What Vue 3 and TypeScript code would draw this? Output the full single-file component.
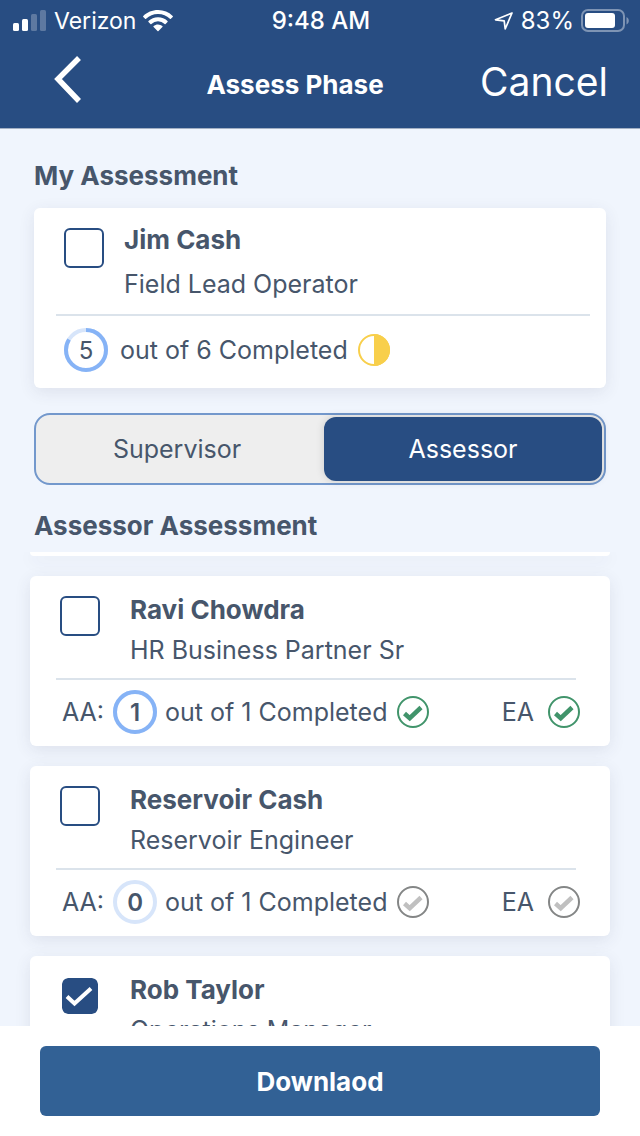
<script setup lang="ts">
import { ref } from 'vue'

interface Progress {
  done: number
  total: number
  complete: boolean
}

interface Person {
  id: string
  name: string
  role: string
  selected: boolean
  progress?: Progress
}

const me = ref({ name: 'Jim Cash', role: 'Field Lead Operator', selected: false, done: 5, total: 6 })

const people = ref<Person[]>([
  { id: 'ravi', name: 'Ravi Chowdra', role: 'HR Business Partner Sr', selected: false, progress: { done: 1, total: 1, complete: true } },
  { id: 'reservoir', name: 'Reservoir Cash', role: 'Reservoir Engineer', selected: false, progress: { done: 0, total: 1, complete: false } },
  { id: 'rob', name: 'Rob Taylor', role: 'Operations Manager', selected: true },
])

const tabs = ['Supervisor', 'Assessor'] as const
const activeTab = ref<(typeof tabs)[number]>('Assessor')

const circumference = 2 * Math.PI * 20
const dash = (done: number, total: number): string =>
  `${(circumference * done) / total} ${circumference}`
</script>

<template>
  <div class="screen">
    <header class="top">
      <div class="status">
        <div class="status-left">
          <svg class="signal" viewBox="0 0 34 22" aria-hidden="true">
            <rect x="0" y="13" width="6" height="8" rx="1.5" fill="#fff" />
            <rect x="9" y="9" width="6" height="12" rx="1.5" fill="#fff" />
            <rect x="18" y="4" width="6" height="17" rx="1.5" fill="#fff" opacity=".25" />
            <rect x="27" y="0" width="6" height="21" rx="1.5" fill="#fff" opacity=".25" />
          </svg>
          <span>Verizon</span>
          <svg class="wifi" viewBox="0 0 30 22" aria-hidden="true">
            <path d="M15 0C9.300 0 4 2.200.3 5.900a.7.7 0 0 0 0 1l1.800 1.900a.7.7 0 0 0 1 0A17 17 0 0 1 15 4.100a17 17 0 0 1 11.900 4.700.7.7 0 0 0 1 0l1.800-1.900a.7.7 0 0 0 0-1A21.100 21.100 0 0 0 15 0Z" fill="#fff" />
            <path d="M15 7.300c-3.700 0-7 1.400-9.500 3.700a.7.7 0 0 0 0 1l1.900 1.900a.7.7 0 0 0 1 0 9.600 9.600 0 0 1 13.200 0 .7.7 0 0 0 1 0l1.900-1.900a.7.7 0 0 0 0-1A13.900 13.900 0 0 0 15 7.300Z" fill="#fff" />
            <path d="M15 14.500c-1.700 0-3.200.6-4.400 1.600a.7.7 0 0 0 0 1l3.900 4a.7.7 0 0 0 1 0l3.900-4a.7.7 0 0 0 0-1 6.800 6.800 0 0 0-4.400-1.600Z" fill="#fff" />
          </svg>
        </div>
        <span class="clock">9:48 AM</span>
        <div class="status-right">
          <svg class="locate" viewBox="0 0 20 20" aria-hidden="true">
            <path d="M18 2 1.500 8.800l8.700 1L11.200 18 18 2Z" fill="none" stroke="#fff" stroke-width="1.700" stroke-linejoin="round" />
          </svg>
          <span>83%</span>
          <svg class="battery" viewBox="0 0 48 24" aria-hidden="true">
            <rect x="1" y="1" width="42" height="21" rx="6" fill="none" stroke="#fff" stroke-width="2" opacity=".4" />
            <rect x="4" y="4" width="30" height="15" rx="3" fill="#fff" />
            <path d="M45.500 8v7.500c1.500-.7 2.300-2 2.300-3.700s-.8-3.100-2.300-3.800Z" fill="#fff" opacity=".4" />
          </svg>
        </div>
      </div>
      <nav class="nav">
        <button class="back" type="button" aria-label="Back">
          <svg viewBox="0 0 28 50" aria-hidden="true">
            <path d="M25 3 4 24l21 22" fill="none" stroke="#fff" stroke-width="5.500" />
          </svg>
        </button>
        <h1>Assess Phase</h1>
        <button class="cancel" type="button">Cancel</button>
      </nav>
    </header>

    <main>
      <h2 class="mine">My Assessment</h2>
      <section class="card own">
        <label class="person">
          <span class="tick">
            <input v-model="me.selected" type="checkbox" />
            <svg viewBox="0 0 40 40" aria-hidden="true"><path d="m7 20.500 7.500 7L31 12.500" /></svg>
          </span>
          <span class="who">
            <strong>{{ me.name }}</strong>
            <span>{{ me.role }}</span>
          </span>
        </label>
        <div class="progress">
          <span class="ring">
            <svg viewBox="0 0 44 44" aria-hidden="true">
              <circle class="track" cx="22" cy="22" r="20" />
              <circle class="value" cx="22" cy="22" r="20" :stroke-dasharray="dash(me.done, me.total)" transform="rotate(-90 22 22)" />
            </svg>
            <span class="digit">{{ me.done }}</span>
          </span>
          <span class="count">out of {{ me.total }} Completed</span>
          <svg class="mark" viewBox="0 0 32 32" aria-hidden="true">
            <circle cx="16" cy="16" r="15" fill="#fff" stroke="#f8cf4b" stroke-width="2" />
            <path d="M16 0a16 16 0 0 1 0 32Z" fill="#f8cf4b" />
          </svg>
        </div>
      </section>

      <div class="tabs" role="tablist">
        <button
          v-for="tab in tabs"
          :key="tab"
          type="button"
          role="tab"
          :aria-selected="activeTab === tab"
          :class="{ active: activeTab === tab }"
          @click="activeTab = tab"
        >
          {{ tab }}
        </button>
      </div>

      <h2 class="theirs">Assessor Assessment</h2>
      <div class="list">
        <div class="card tail"></div>
        <section v-for="person in people" :key="person.id" class="card other">
          <label class="person">
            <span class="tick">
              <input v-model="person.selected" type="checkbox" />
              <svg viewBox="0 0 40 40" aria-hidden="true"><path d="m7 20.500 7.500 7L31 12.500" /></svg>
            </span>
            <span class="who">
              <strong>{{ person.name }}</strong>
              <span>{{ person.role }}</span>
            </span>
          </label>
          <div v-if="person.progress" class="progress" :class="{ complete: person.progress.complete }">
            <span>AA:</span>
            <span class="ring">
              <svg viewBox="0 0 44 44" aria-hidden="true">
                <circle class="track" cx="22" cy="22" r="20" />
                <circle v-if="person.progress.done" class="value" cx="22" cy="22" r="20" :stroke-dasharray="dash(person.progress.done, person.progress.total)" transform="rotate(-90 22 22)" />
              </svg>
              <span class="digit">{{ person.progress.done }}</span>
            </span>
            <span class="count">out of {{ person.progress.total }} Completed</span>
            <svg class="mark" viewBox="0 0 32 32" aria-hidden="true">
              <circle class="outline" cx="16" cy="16" r="15" />
              <path class="check" d="m7.500 17.500 5.200 4.700L24 11.500" />
            </svg>
            <span class="ea">EA</span>
            <svg class="mark" viewBox="0 0 32 32" aria-hidden="true">
              <circle class="outline" cx="16" cy="16" r="15" />
              <path class="check" d="m7.500 17.500 5.200 4.700L24 11.500" />
            </svg>
          </div>
        </section>
      </div>
    </main>

    <footer>
      <button type="button">Downlaod</button>
    </footer>
  </div>
</template>

<style>
body {
  background: #f0f5fd;
}
</style>

<style scoped>
.screen {
  display: flex;
  flex-direction: column;
  height: 100vh;
  overflow: hidden;
  box-sizing: border-box;
  color: #47566b;
  background: #f0f5fd;
  font-family: Inter, "Liberation Sans", sans-serif;
  font-size: 25px;
}

.screen *,
.screen *::before {
  box-sizing: border-box;
}

button {
  margin: 0;
  padding: 0;
  border: 0;
  background: none;
  color: inherit;
  font: inherit;
  cursor: pointer;
}

svg {
  display: block;
  flex: none;
}

strong {
  font-size: 26px;
  font-weight: 700;
}

.top {
  flex: none;
  background: #284d82;
  border-bottom: 1px solid #a3b0c4;
  color: #fff;
}

.status {
  display: grid;
  grid-template-columns: 1fr auto 1fr;
  align-items: center;
  height: 40px;
  padding: 1px 11px 0 13px;
  font-size: 24px;
}

.status-left,
.status-right {
  display: flex;
  align-items: center;
  gap: 7px;
}

.status-right {
  justify-content: flex-end;
}

.status-left {
  font-size: 23px;
}

.signal {
  width: 34px;
  height: 22px;
}

.wifi {
  width: 30px;
  height: 22px;
}

.clock {
  font-weight: 500;
}

.locate {
  width: 20px;
  height: 20px;
}

.battery {
  width: 48px;
  height: 24px;
}

.nav {
  display: flex;
  align-items: center;
  justify-content: space-between;
  height: 88px;
  padding: 0 32px 8px 54px;
}

.back {
  width: 56px;
  height: 50px;
}

.back svg {
  width: 28px;
  height: 50px;
}

h1,
h2 {
  margin: 0;
  font-size: 26px;
  font-weight: 700;
}

h1 {
  padding-top: 8px;
}

.cancel {
  padding-top: 2px;
  font-size: 39px;
}

main {
  display: flex;
  flex: 1;
  flex-direction: column;
  min-height: 0;
}

h2 {
  flex: none;
  padding: 0 34px;
  line-height: 32px;
}

.mine {
  margin: 31px 0 16px;
}

.theirs {
  margin: 25px 0 10px;
}

.card {
  flex: none;
  border-radius: 6px;
  background: #fff;
  box-shadow: 0 4px 16px rgb(60 60 90 / 10%);
}

.own {
  margin: 0 34px;
  padding: 10px 16px 4px 22px;
}

.other {
  min-height: 170px;
  padding: 14px 34px 0 26px;
}

.tail {
  height: 4px;
  border-radius: 0 0 6px 6px;
}

.person {
  display: flex;
  gap: 20px;
  padding: 0 8px 8px;
  cursor: pointer;
}

.other .person {
  gap: 30px;
  padding: 0 4px 8px;
}

.who {
  display: flex;
  flex-direction: column;
  line-height: 44px;
}

.other .who {
  line-height: 40px;
}

.tick {
  position: relative;
  flex: none;
  width: 40px;
  height: 40px;
  margin-top: 10px;
}

.other .tick {
  margin-top: 6px;
}

.tick input {
  display: block;
  width: 40px;
  height: 40px;
  margin: 0;
  appearance: none;
  border: 2px solid #284d82;
  border-radius: 6px;
  background: #fff;
}

.tick input:checked {
  border-color: #fff;
  border-radius: 8px;
  background: #284d82;
  background-clip: padding-box;
}

.tick svg {
  position: absolute;
  inset: 0;
  fill: none;
  stroke: #fff;
  stroke-width: 4;
  pointer-events: none;
}

.progress {
  display: flex;
  align-items: center;
  height: 70px;
  padding-left: 8px;
  border-top: 2px solid #dbe3eb;
}

.other .progress {
  height: 66px;
  padding-left: 6px;
}

.ring {
  display: grid;
  place-items: center;
  flex: none;
  margin-right: 12px;
  font-size: 24px;
}

.ring > * {
  grid-area: 1 / 1;
}

.ring svg {
  width: 44px;
  height: 44px;
}

.ring circle {
  fill: none;
  stroke-width: 4;
}

.ring .track {
  stroke: #d7e5fa;
}

.ring .value {
  stroke: #86b3f6;
}

.other .ring {
  margin: 0 8px 0 9px;
  font-weight: 600;
}

.count {
  margin-right: 10px;
}

.mark {
  width: 32px;
  height: 32px;
}

.outline {
  fill: none;
  stroke: #848686;
  stroke-width: 2;
}

.check {
  fill: none;
  stroke: #c0c0c0;
  stroke-width: 4.500;
}

.complete .outline,
.complete .check {
  stroke: #41946b;
}

.ea {
  margin: 0 14px 0 auto;
}

.other .progress .ea + .mark {
  margin-right: -4px;
}

.tabs {
  display: grid;
  flex: none;
  grid-template-columns: 1fr 1fr;
  gap: 8px;
  height: 72px;
  margin: 25px 34px 0;
  padding: 2px;
  border: 2px solid #7398cc;
  border-radius: 16px;
  background: #eee;
}

.tabs button {
  border-radius: 12px;
}

.tabs .active {
  background: #284d82;
  color: #fff;
  box-shadow: 0 0 8px rgb(0 0 0 / 15%);
}

.list {
  display: flex;
  flex: 1;
  flex-direction: column;
  gap: 20px;
  min-height: 0;
  padding: 0 30px;
  overflow-y: auto;
  scrollbar-width: none;
}

footer {
  flex: none;
  padding: 20px 40px;
  background: #fff;
}

footer button {
  width: 100%;
  height: 70px;
  border-radius: 6px;
  background: #326195;
  color: #fff;
  font-size: 26px;
  font-weight: 700;
}
</style>
